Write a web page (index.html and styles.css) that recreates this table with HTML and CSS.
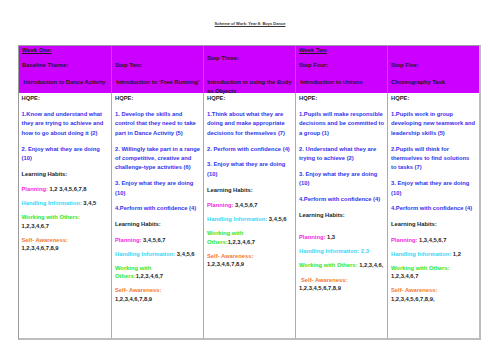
FILE: index.html
```html
<!DOCTYPE html>
<html lang="en">
<head>
<meta charset="utf-8">
<title>Scheme of Work: Year 8: Boys Dance</title>
<link rel="stylesheet" href="styles.css">
</head>
<body>
<p class="title">Scheme of Work: Year 8: Boys Dance</p>
<div class="sheet">
  <div class="head">
    <div class="c"><span class="u">Week One:</span></div>
    <div class="c d"></div>
    <div class="c d span">Step Three:</div>
    <div class="c d"><span class="u">Week Two</span></div>
    <div class="c d"></div>

    <div class="c r2">Baseline Theme:</div>
    <div class="c d r2">Step Two:</div>
    <div class="c d r2">Step Four:</div>
    <div class="c d r2">Step Five:</div>

    <div class="c r3 ind">Introduction to Dance Activity</div>
    <div class="c d r3 ind">Introduction to ‘Free Running’</div>
    <div class="c d r3">Introduction to using the Body<br>as Objects</div>
    <div class="c d r3 ind">Introduction to Unison</div>
    <div class="c d r3">Choreography Task</div>
  </div>
  <div class="body">
    <div class="col">
      <p class="hq">HQPE:</p>
      <p class="bl">1.Know and understand what<br>they are trying to achieve and<br>how to go about doing it (2)</p>
      <p class="bl">2. Enjoy what they are doing<br>(10)</p>
      <p class="lh">Learning Habits:</p>
      <p class="hb"><span class="pl">Planning:</span> 1,2 3,4,5,6,7,8</p>
      <p class="hb"><span class="hi">Handling Information:</span> 3,4,5</p>
      <p class="hb"><span class="wo">Working with Others:</span><br>1,2,3,4,6,7</p>
      <p class="hb"><span class="sa">Self- Awareness:</span><br>1,2,3,4,6,7,8,9</p>
    </div>
    <div class="col">
      <p class="hq">HQPE:</p>
      <p class="bl">1. Develop the skills and<br>control that they need to take<br>part in Dance Activity (5)</p>
      <p class="bl">2. Willingly take part in a range<br>of competitive, creative and<br>challenge-type activities (6)</p>
      <p class="bl">3. Enjoy what they are doing<br>(10)</p>
      <p class="bl">4.Perform with confidence (4)</p>
      <p class="lh">Learning Habits:</p>
      <p class="hb"><span class="pl">Planning:</span> 3,4,5,6,7</p>
      <p class="hb"><span class="hi">Handling Information:</span> 3,4,5,6</p>
      <p class="hb"><span class="wo">Working with<br>Others:</span>1,2,3,4,6,7</p>
      <p class="hb"><span class="sa">Self- Awareness:</span><br>1,2,3,4,6,7,8,9</p>
    </div>
    <div class="col">
      <p class="hq">HQPE:</p>
      <p class="bl">1.Think about what they are<br>doing and make appropriate<br>decisions for themselves (7)</p>
      <p class="bl">2. Perform with confidence (4)</p>
      <p class="bl">3. Enjoy what they are doing<br>(10)</p>
      <p class="lh">Learning Habits:</p>
      <p class="hb"><span class="pl">Planning:</span> 3,4,5,6,7</p>
      <p class="hb"><span class="hi">Handling Information:</span> 3,4,5,6</p>
      <p class="hb"><span class="wo">Working with<br>Others:</span>1,2,3,4,6,7</p>
      <p class="hb"><span class="sa">Self- Awareness:</span><br>1,2,3,4,6,7,8,9</p>
    </div>
    <div class="col">
      <p class="hq">HQPE:</p>
      <p class="bl">1.Pupils will make responsible<br>decisions and be committed to<br>a group (1)</p>
      <p class="bl">2. Understand what they are<br>trying to achieve (2)</p>
      <p class="bl">3. Enjoy what they are doing<br>(10)</p>
      <p class="bl">4.Perform with confidence (4)</p>
      <p class="lh more">Learning Habits:</p>
      <p class="hb"><span class="pl">Planning:</span> 1,3</p>
      <p class="hb"><span class="hi">Handling Information: 2,3</span></p>
      <p class="hb"><span class="wo">Working with Others:</span> 1,2,3,4,6,</p>
      <p class="hb"><span class="sa ind2">Self- Awareness:</span><br>1,2,3,4,5,6,7,8,9</p>
    </div>
    <div class="col">
      <p class="hq">HQPE:</p>
      <p class="bl">1.Pupils work in group<br>developing new teamwork and<br>leadership skills (5)</p>
      <p class="bl">2.Pupils will think for<br>themselves to find solutions<br>to tasks (7)</p>
      <p class="bl">3. Enjoy what they are doing<br>(10)</p>
      <p class="bl">4.Perform with confidence (4)</p>
      <p class="lh">Learning Habits:</p>
      <p class="hb"><span class="pl">Planning:</span> 1,3,4,5,6,7</p>
      <p class="hb"><span class="hi">Handling Information:</span> 1,2</p>
      <p class="hb"><span class="wo">Working with Others:</span><br>1,2,3,4,6,7</p>
      <p class="hb"><span class="sa">Self- Awareness:</span><br>1,2,3,4,5,6,7,8,9,</p>
    </div>
  </div>
</div>
</body>
</html>
```
FILE: styles.css
```css
* { box-sizing: border-box; }
html, body { margin: 0; padding: 0; background: #ffffff; }
body {
  width: 500px;
  height: 354px;
  overflow: hidden;
  font-family: "Liberation Sans", Arial, sans-serif;
  font-weight: bold;
  font-size: 5.8px;
  color: #1c1c1c;
}
.title {
  margin: 0;
  padding-top: 21px;
  height: 27px;
  line-height: 6px;
  font-size: 4px;
  text-align: center;
  text-decoration: underline;
  color: #333333;
}
.sheet {
  margin: 18px 0 0 18px;
  width: 463px;
  border-top: 1px solid #9a9a9a;
  border-left: 1px solid #9a9a9a;
  border-right: 2px solid #bdbdbd;
  border-bottom: 2px solid #bdbdbd;
}
.head {
  display: grid;
  grid-template-columns: repeat(5, 1fr);
  grid-template-rows: 12px 17px 18px;
  background: #cc00ff;
}
.head .c {
  padding-left: 3px;
  line-height: 9.4px;
  white-space: nowrap;
  color: #1a1a1a;
}
.head .r2 { padding-top: 3px; }
.head .r3 { padding-top: 3px; line-height: 8.6px; }
.head .span { grid-row: span 2; padding-top: 7.6px; }
.head .ind { padding-left: 4.3px; }
.d { border-left: 1px solid #8f6f99; }
.u { text-decoration: underline; }

.body {
  display: grid;
  grid-template-columns: repeat(5, 1fr);
  height: 245px;
}
.col {
  padding: 1px 2px 0 3px;
  white-space: nowrap;
}
.col + .col { border-left: 1px solid #ababab; }
.col:first-child { padding-left: 2.5px; }
.col p { margin: 0; }
.hq { line-height: 9.4px; margin-bottom: 6.6px !important; }
.bl { color: #3333ee; line-height: 9.4px; margin-bottom: 6.4px !important; }
.lh { line-height: 9.4px; margin-bottom: 6px !important; }
.lh.more { margin-bottom: 13px !important; }
.hb { line-height: 8.3px; margin-bottom: 5.8px !important; }
.pl { color: #f528e0; }
.hi { color: #36d6f5; }
.wo { color: #2ee62e; }
.sa { color: #f47a30; }
.ind2 { padding-left: 2px; }
```
